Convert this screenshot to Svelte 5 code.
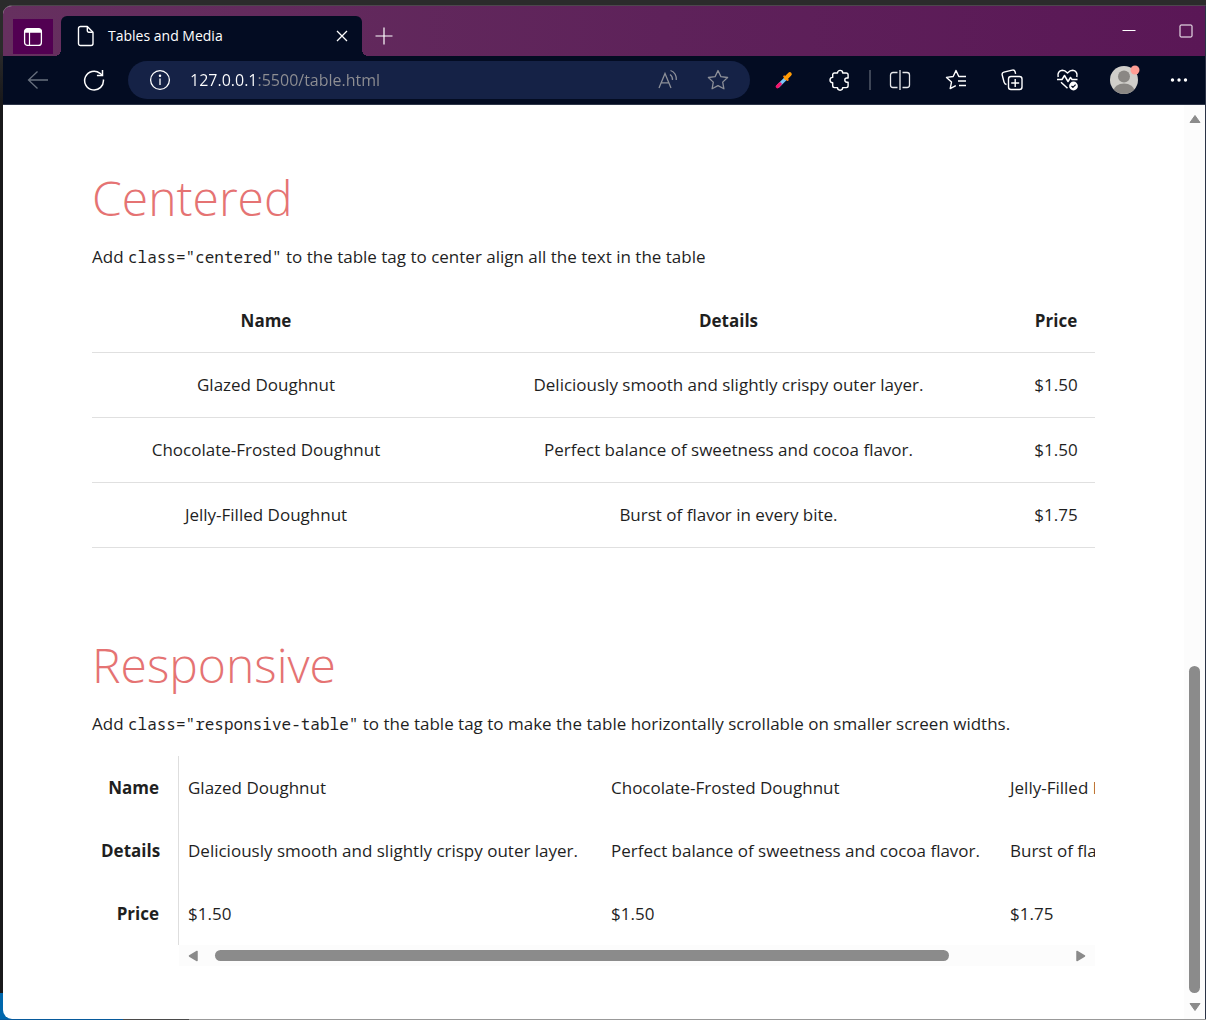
<script>
  const url = '127.0.0.1:5500/table.html';
  const doughnuts = [
    { name: 'Glazed Doughnut', details: 'Deliciously smooth and slightly crispy outer layer.', price: '$1.50' },
    { name: 'Chocolate-Frosted Doughnut', details: 'Perfect balance of sweetness and cocoa flavor.', price: '$1.50' },
    { name: 'Jelly-Filled Doughnut', details: 'Burst of flavor in every bite.', price: '$1.75' }
  ];
</script>

<div class="desktop">
  <div class="window">
    <header class="titlebar">
      <button class="workspaces" aria-label="Tab actions">
        <svg width="20" height="20" viewBox="0 0 20 20"><rect x="1.6" y="1.6" width="16.8" height="16.8" rx="3" fill="none" stroke="#fff" stroke-width="1.3" /><path d="M1.5 5.8V4.5a3 3 0 0 1 3-3h11a3 3 0 0 1 3 3v1.3z" fill="#fff" /><path d="M6.5 5v13" stroke="#fff" stroke-width="1.2" /></svg>
      </button>
      <div class="tab">
        <svg class="page-icon" width="18" height="22" viewBox="0 0 18 22" fill="none" stroke="#fff" stroke-width="1.4" stroke-linejoin="round"><path d="M3.5 1.5h6.8l5.7 5.7v11.3a2 2 0 0 1-2 2H3.5a2 2 0 0 1-2-2v-15a2 2 0 0 1 2-2z" /><path d="M10.3 1.7v4a1.5 1.5 0 0 0 1.5 1.5h4" /></svg>
        <span class="tab-title">Tables and Media</span>
        <button class="close" aria-label="Close tab">
          <svg width="12" height="12" viewBox="0 0 12 12" stroke="#fff" stroke-width="1.3"><path d="M1 1l10 10M11 1L1 11" /></svg>
        </button>
      </div>
      <button class="new-tab" aria-label="New tab">
        <svg width="18" height="18" viewBox="0 0 18 18" stroke="#fff" stroke-width="1.2"><path d="M9 0.5v17M0.5 9h17" /></svg>
      </button>
      <div class="window-controls">
        <button aria-label="Minimize"><svg width="14" height="14" viewBox="0 0 14 14"><path d="M0.5 6.5h13" stroke="#fff" /></svg></button>
        <button aria-label="Maximize"><svg width="14" height="14" viewBox="0 0 14 14"><rect x="1" y="1" width="12" height="12" rx="1" fill="none" stroke="#fff" /></svg></button>
      </div>
    </header>

    <nav class="toolbar">
      <button class="tool" aria-label="Back">
        <svg width="22" height="22" viewBox="0 0 22 22" fill="none" stroke="#68707e" stroke-width="1.3"><path d="M21 11H1.5M10.5 2.5L1.5 11l9 8.5" /></svg>
      </button>
      <button class="tool" aria-label="Refresh">
        <svg width="22" height="22" viewBox="0 0 22 22" fill="none" stroke="#fff" stroke-width="1.5"><path d="M20.4 10.5A9.4 9.4 0 1 1 17 4.3l2.2 2" /><path d="M19.5 1v5.6h-5.6" /></svg>
      </button>
      <div class="address">
        <svg width="22" height="22" viewBox="0 0 22 22" fill="none" stroke="#fff" stroke-width="1.3"><circle cx="11" cy="11" r="9.4" /><path d="M11 9.5v6.5" /><circle cx="11" cy="6.8" r=".6" fill="#fff" /></svg>
        <input aria-label="Address" value={url} />
        <button aria-label="Read aloud">
          <svg width="22" height="22" viewBox="0 0 22 22" fill="none" stroke="#8c8f98" stroke-width="1.3"><path d="M2 19L8 4.5 14 19M4.2 13.8h7.6M13 5.5a6 6 0 0 1 2.5 5.5M13.5 1.5c4 1.5 6 5 5.8 9.5" /></svg>
        </button>
        <button aria-label="Add to favorites">
          <svg width="22" height="22" viewBox="0 0 22 22" fill="none" stroke="#8c8f98" stroke-width="1.3" stroke-linejoin="round"><path d="M11 1.5l2.9 6.1 6.7.9-4.9 4.6 1.2 6.7-5.9-3.2-5.9 3.2 1.2-6.7L1.4 8.5l6.7-.9z" /></svg>
        </button>
      </div>
      <button class="tool" aria-label="Color picker">
        <svg width="18" height="18" viewBox="0 0 18 18"><path d="M2.5 15.8L11 7.3" stroke="#7cc8fa" stroke-width="3.4" /><path d="M2.4 15.6l2.6-2.6" stroke="#f5146b" stroke-width="3.4" stroke-linecap="round" /><path d="M9.2 5.5l3.4 3.4" stroke="#fb7b0a" stroke-width="2.2" stroke-linecap="round" /><path d="M11 7l3.8-3.8" stroke="#ff9c05" stroke-width="4" stroke-linecap="round" /></svg>
      </button>
      <button class="tool" aria-label="Extensions">
        <svg width="22" height="22" viewBox="0 0 22 22" fill="none" stroke="#fff" stroke-width="1.4" stroke-linejoin="round"><path d="M5.5 4h3a2.6 2.6 0 0 1 5.2 0h3.6a1.8 1.8 0 0 1 1.8 1.8V9h-1.2a2.1 2.1 0 0 0 0 4.2h1.2v3.6a1.8 1.8 0 0 1-1.8 1.8h-3.6a2.6 2.6 0 0 1-5.2 0h-3a1.8 1.8 0 0 1-1.8-1.8v-3a2.7 2.7 0 0 1 0-5.4v-3A1.8 1.8 0 0 1 5.500 4z" /></svg>
      </button>
      <span class="divider"></span>
      <button class="tool" aria-label="Split screen">
        <svg width="22" height="22" viewBox="0 0 22 22" fill="none" stroke="#e8e9ec" stroke-width="1.3"><path d="M8.500 3.500H4A2.500 2.500 0 0 0 1.500 6v10A2.500 2.500 0 0 0 4 18.500h4.500M13.500 3.500H18A2.500 2.500 0 0 1 20.500 6v10a2.500 2.500 0 0 1-2.500 2.500h-4.500" /><path d="M11 1v20" /></svg>
      </button>
      <button class="tool" aria-label="Favorites">
        <svg width="22" height="22" viewBox="0 0 22 22" fill="none" stroke="#fff" stroke-width="1.4" stroke-linejoin="round"><path d="M20 7.500h-6.200L11 1.500 8.200 7.500l-6.700.9 5 4.700-1.300 6.500 5.600-3M13 12h8M14 16.500h7M13.500 7.500H21" /></svg>
      </button>
      <button class="tool" aria-label="Collections">
        <svg width="22" height="22" viewBox="0 0 22 22" fill="none" stroke="#fff" stroke-width="1.4"><rect x="7.500" y="7.500" width="13.500" height="13" rx="2.500" /><path d="M14.200 10v8M10.200 14h8M5.500 15.500a3 3 0 0 1-2.400-2.300L1.200 6a2.400 2.400 0 0 1 1.700-2.900l8.300-2a2.400 2.400 0 0 1 2.900 1.700l.5 2" /></svg>
      </button>
      <button class="tool" aria-label="Browser essentials">
        <svg width="24" height="24" viewBox="0 0 24 24" fill="none" stroke="#fff" stroke-width="1.500" stroke-linejoin="round"><path d="M2.200 9C1.200 5.500 3 2.500 6.300 2.300c2.200 0 3.700 1.200 5.200 2.700C13 3.500 14.500 2.300 16.700 2.300c3.300.2 5.100 3.200 4.100 6.700M1 11.500h5l2.500-4 3.500 6 2.500-4 1.500 2h5.500M5 14.200l6.500 6" /><circle cx="17.500" cy="18" r="4.400" fill="#fff" stroke="none" /><path d="M15.500 18l1.400 1.400 2.700-2.700" stroke="#030c22" stroke-width="1.200" /></svg>
      </button>
      <button class="tool" aria-label="Profile">
        <svg width="32" height="32" viewBox="0 0 32 32"><defs><clipPath id="face"><circle cx="16" cy="16" r="14" /></clipPath></defs><circle cx="16" cy="16" r="14" fill="#d0ceca" /><g clip-path="url(#face)" fill="#8a8784"><circle cx="16" cy="12.500" r="6" /><ellipse cx="16" cy="27" rx="10.500" ry="7.500" /></g><circle cx="27" cy="6" r="4.500" fill="#ff9d94" /></svg>
      </button>
      <button class="tool more" aria-label="Settings and more">
        <svg width="18" height="6" viewBox="0 0 18 6" fill="#fff"><circle cx="2.500" cy="3" r="1.700" /><circle cx="9" cy="3" r="1.700" /><circle cx="15.500" cy="3" r="1.700" /></svg>
      </button>
    </nav>

    <div class="viewport">
      <main>
        <section>
          <h1>Centered</h1>
          <p>Add <code>class="centered"</code> to the table tag to center align all the text in the table</p>
          <table class="centered">
            <thead>
              <tr><th class="col-name">Name</th><th>Details</th><th class="col-price">Price</th></tr>
            </thead>
            <tbody>
              {#each doughnuts as d}
                <tr><td>{d.name}</td><td>{d.details}</td><td>{d.price}</td></tr>
              {/each}
            </tbody>
          </table>
        </section>

        <section>
          <h1>Responsive</h1>
          <p>Add <code>class="responsive-table"</code> to the table tag to make the table horizontally scrollable on smaller screen widths.</p>
          <table class="responsive-table">
            <thead>
              <tr><th>Name</th><th>Details</th><th>Price</th></tr>
            </thead>
            <tbody>
              {#each doughnuts as d}
                <tr><td>{d.name}</td><td>{d.details}</td><td>{d.price}</td></tr>
              {/each}
            </tbody>
          </table>
          <div class="hscroll">
            <svg width="10" height="12" viewBox="0 0 10 12"><path d="M9 1.500v9L1.500 6z" fill="#8b8b8b" stroke="#8b8b8b" stroke-width="1.500" stroke-linejoin="round" /></svg>
            <div class="htrack"><div class="hthumb"></div></div>
            <svg width="10" height="12" viewBox="0 0 10 12"><path d="M1 1.500v9L8.500 6z" fill="#8b8b8b" stroke="#8b8b8b" stroke-width="1.500" stroke-linejoin="round" /></svg>
          </div>
        </section>
      </main>
      <div class="vscroll">
        <svg width="12" height="10" viewBox="0 0 12 10"><path d="M1 8.500h10l-5-7z" fill="#8b8b8b" stroke="#8b8b8b" stroke-linejoin="round" /></svg>
        <div class="vtrack"><div class="vthumb"></div></div>
        <svg width="12" height="10" viewBox="0 0 12 10"><path d="M1 1.500h10l-5 7z" fill="#8b8b8b" stroke="#8b8b8b" stroke-linejoin="round" /></svg>
      </div>
    </div>
  </div>
</div>

<style>
  :global(body) { margin: 0; }
  .desktop, .desktop * { box-sizing: border-box; }
  .desktop {
    min-height: 100vh;
    display: flex;
    padding: 5px 0 1px 3px;
    font-family: "Open Sans", "Noto Sans", sans-serif;
    background:
      linear-gradient(90deg, #075a9c 0 123px, #4a4a4a 123px 189px, #999 189px) bottom / 100% 1px no-repeat,
      linear-gradient(#0067ac, #0067ac) left bottom / 20px 27px no-repeat,
      linear-gradient(#2b2b2b 0 50px, #19191b 100px);
  }
  .window {
    flex: 1;
    min-width: 0;
    display: flex;
    flex-direction: column;
    border-top: 1px solid #4d464d;
    border-right: 1px solid #2b3346;
    border-radius: 9px 0 0 9px;
    overflow: hidden;
    background: #fff;
  }
  button { border: 0; padding: 0; background: none; display: flex; align-items: center; justify-content: center; }
  svg { display: block; flex: none; }

  .titlebar {
    height: 50px;
    display: flex;
    align-items: flex-end;
    padding-left: 10px;
    background: linear-gradient(90deg, #66305f, #5e225a 55%, #5a1756);
  }
  .workspaces { width: 40px; height: 35px; margin-bottom: 2px; background: #520052; }
  .tab {
    position: relative;
    width: 301px;
    height: 40px;
    margin-left: 8px;
    padding: 0 12px 0 16px;
    display: flex;
    align-items: center;
    border-radius: 6px 6px 0 0;
    background: #030c22;
    color: #fff;
    font-size: 14px;
    line-height: 18px;
  }
  .tab::before, .tab::after { content: ""; position: absolute; bottom: 0; width: 6px; height: 6px; }
  .tab::before { right: 100%; background: radial-gradient(circle at 0 0, transparent 6px, #030c22 6px); }
  .tab::after { left: 100%; background: radial-gradient(circle at 100% 0, transparent 6px, #030c22 6px); }
  .tab-title { flex: 1; margin-left: 13px; }
  .close { width: 16px; height: 16px; }
  .new-tab { width: 24px; height: 40px; margin-left: 10px; }
  .window-controls { display: flex; margin-left: auto; align-self: stretch; }
  .window-controls button { width: 76px; }
  .window-controls button:last-child { width: 38px; }

  .toolbar { height: 49px; display: flex; align-items: center; padding-left: 7px; background: #030c22; border-bottom: 1px solid #2d3548; }
  .tool { width: 56px; height: 40px; flex: none; }
  .more { width: 53px; }
  .divider { width: 2px; height: 20px; margin: 0 1px; background: #3d4556; }
  .address {
    flex: 1;
    min-width: 0;
    height: 38px;
    margin: 0 6px;
    padding: 0 16px 0 21px;
    display: flex;
    align-items: center;
    border-radius: 19px;
    background: #152246;
  }
  .address input {
    flex: 1;
    min-width: 0;
    margin-left: 19px;
    padding: 0;
    border: 0;
    outline: 0;
    font: 16px/24px "Open Sans", "Noto Sans", sans-serif;
    color: transparent;
    background: linear-gradient(90deg, #fff 67px, #8f8f93 67px);
    -webkit-background-clip: text;
    background-clip: text;
  }
  .address button { width: 32px; height: 32px; }
  .address button:last-child { margin-left: 18px; }

  .viewport { flex: 1; display: flex; }
  main { flex: 1; min-width: 0; padding: 64px 89px 32px; color: #1f1f1f; font-size: 17px; line-height: 24px; }
  section + section { margin-top: 88px; }
  h1 { margin: 0; color: #e57373; font-size: 48px; line-height: 58px; font-weight: 300; }
  p { margin: 18px 0 20px; white-space: nowrap; }
  code { font-family: "Noto Sans Mono", "DejaVu Sans Mono", monospace; font-size: 16px; }
  table { width: 100%; border-collapse: collapse; }
  th { font-weight: 700; }
  .centered { table-layout: fixed; text-align: center; }
  .centered th { padding: 20px 0 19px; }
  .centered td { padding: 20px 0; }
  .centered tr { border-bottom: 1px solid #e0e0e0; }
  .col-name { width: 348px; }
  .col-price { width: 78px; }

  .responsive-table { display: flex; white-space: nowrap; }
  .responsive-table thead { display: block; flex: none; width: 87px; border-right: 1px solid #dedede; text-align: right; }
  .responsive-table tbody { display: flex; flex: 1; min-width: 0; overflow: hidden; }
  .responsive-table tr { display: block; flex: none; }
  .responsive-table tbody tr { width: 399px; }
  .responsive-table tbody tr:first-child { width: 423px; }
  .responsive-table th, .responsive-table td { display: block; padding: 20px 9px 19px; }
  .responsive-table th { padding-right: 19px; }
  .hscroll { display: flex; align-items: center; justify-content: space-between; height: 21px; margin-left: 87px; padding: 0 9px; background: #fcfcfc; }
  .htrack { flex: 1; padding: 0 17px; }
  .hthumb { width: 87%; height: 11px; border-radius: 6px; background: #8b8b8b; }

  .vscroll { width: 21px; padding: 9px 0 7px; display: flex; flex-direction: column; align-items: center; background: #fcfcfc; }
  .vtrack { flex: 1; display: flex; align-items: flex-end; padding: 9px 0; }
  .vthumb { width: 11px; height: 38%; border-radius: 6px; background: #8b8b8b; }
</style>
